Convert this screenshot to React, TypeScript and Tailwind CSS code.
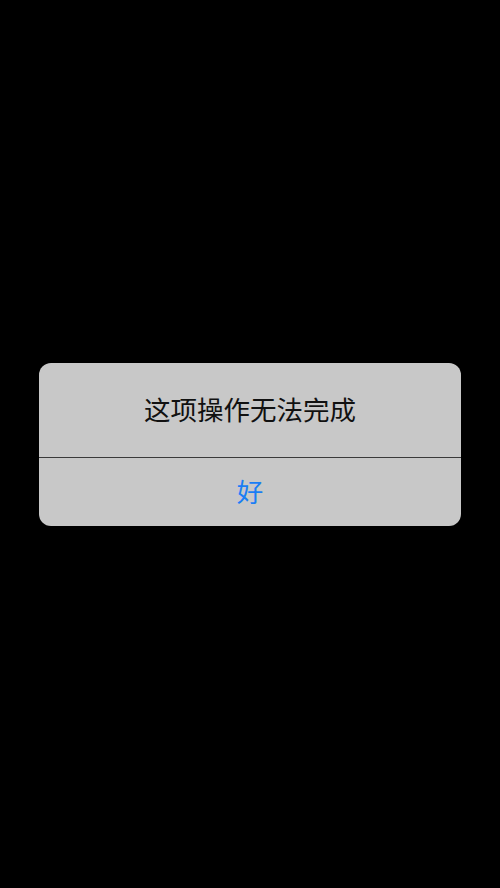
export default function App() {
  return (
    <div className="w-[500px] h-[888px] bg-black flex items-center justify-center" style={{ fontFamily: '"Noto Sans CJK SC", sans-serif' }}>
      <div className="w-[422px] rounded-[12px] bg-[#c8c8c8] overflow-hidden flex flex-col">
        <div className="h-[94px] flex items-center justify-center text-[26.5px] text-[#111] leading-none">
          这项操作无法完成
        </div>
        <div className="h-px bg-[#3a3a3a]" />
        <div className="h-[68px] flex items-center justify-center text-[26.5px] text-[#1a7ef5] leading-none">
          好
        </div>
      </div>
    </div>
  );
}
